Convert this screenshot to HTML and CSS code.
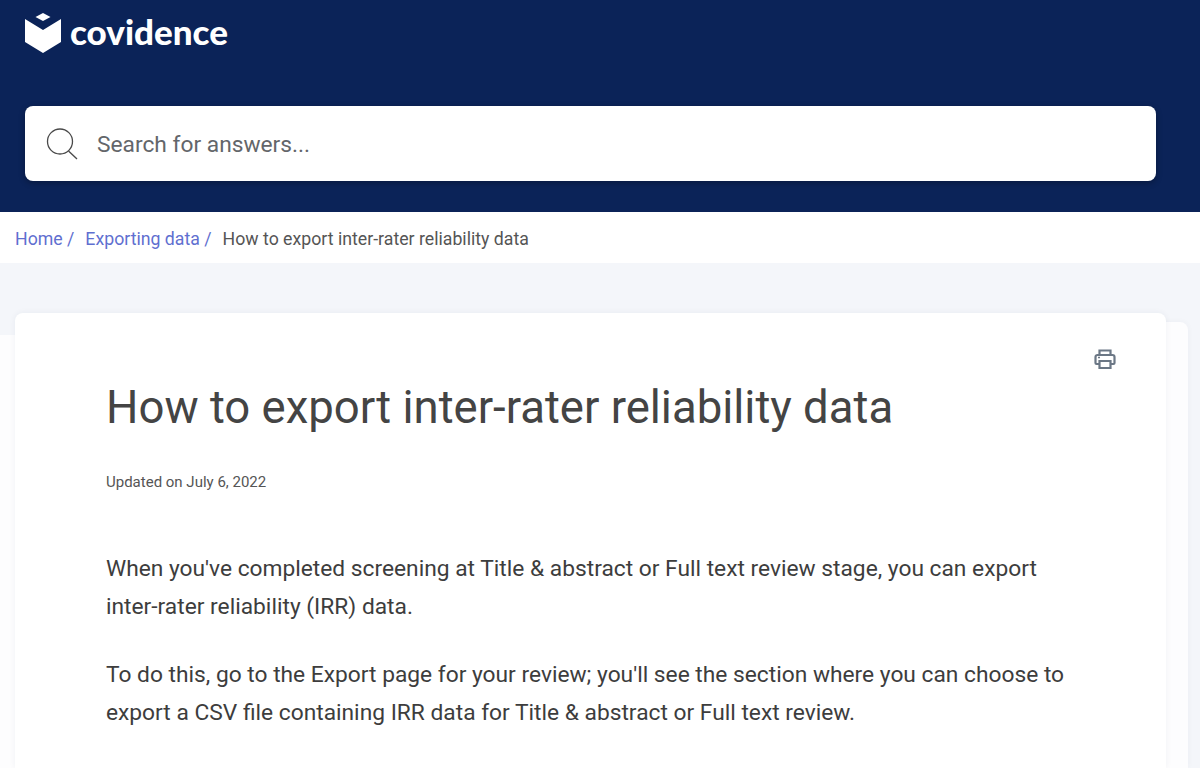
FILE: index.html
```html
<!DOCTYPE html>
<html lang="en">
<head>
    <meta charset="UTF-8">
    <title>How to export inter-rater reliability data</title>
    <link rel="stylesheet" href="styles.css">
</head>
<body>
    <header class="site-header">
        <a class="logo" href="#">
            <svg class="logo-mark" viewBox="0 0 36 40" width="36" height="40" aria-hidden="true">
                <path d="M18 0l7.500 4-7.500 4-7.500-4z" fill="#fff"/>
                <path d="M0 6l18 11 18-11v23l-18 11-18-11z" fill="#fff"/>
            </svg>
            <span class="logo-text">covidence</span>
        </a>
        <div class="search">
            <svg class="search-icon" viewBox="0 0 32 32" width="32" height="32" aria-hidden="true">
                <circle cx="14" cy="13.500" r="12.500" fill="none" stroke="#4a4a4a" stroke-width="1.300"/>
                <path d="M22.500 23l8.500 8" fill="none" stroke="#4a4a4a" stroke-width="1.300"/>
            </svg>
            <span class="search-placeholder">Search for answers...</span>
        </div>
    </header>

    <nav class="breadcrumb">
        <a href="#">Home /</a>
        <a href="#">Exporting data /</a>
        <span>How to export inter-rater reliability data</span>
    </nav>

    <main class="content">
        <div class="card-back card-back-left"></div>
        <div class="card-back card-back-right"></div>
        <article class="card">
            <svg class="print-icon" viewBox="0 0 22 22" width="22" height="22" aria-hidden="true">
                <path d="M5.500 7V2.500h11V7" fill="none" stroke="#6b7785" stroke-width="2.200"/>
                <path d="M5.500 16H2.500a1 1 0 0 1-1-1V9a2 2 0 0 1 2-2h15a2 2 0 0 1 2 2v6a1 1 0 0 1-1 1h-3" fill="none" stroke="#6b7785" stroke-width="2.200"/>
                <path d="M5.500 13h11v7h-11z" fill="none" stroke="#6b7785" stroke-width="2.200"/>
                <path d="M4 9.500h2" stroke="#6b7785" stroke-width="1.500"/>
            </svg>
            <h1 class="title">How to export inter-rater reliability data</h1>
            <p class="updated">Updated on July 6, 2022</p>
            <p class="body-text">When you've completed screening at Title &amp; abstract or Full text review stage, you can export inter-rater reliability (IRR) data.</p>
            <p class="body-text">To do this, go to the Export page for your review; you'll see the section where you can choose to export a CSV file containing IRR data for Title &amp; abstract or Full text review.</p>
        </article>
    </main>
</body>
</html>
```

FILE: styles.css
```css
html {
    overflow: hidden;
}

body {
    margin: 0;
    height: 768px;
    display: flex;
    flex-direction: column;
    overflow: hidden;
    font-family: 'Roboto', sans-serif;
    background: #f4f6fa;
    color: #444;
}

.site-header {
    height: 212px;
    box-sizing: border-box;
    padding: 13px 44px 0 25px;
    background: #0b2358;
}

.logo {
    display: flex;
    align-items: center;
    gap: 9px;
    height: 40px;
    text-decoration: none;
}

.logo-text {
    padding-bottom: 5px;
    font-family: 'Lato', sans-serif;
    font-size: 35px;
    font-weight: 900;
    line-height: 38px;
    color: #fff;
}

.search {
    display: flex;
    align-items: center;
    gap: 19px;
    height: 75px;
    margin-top: 53px;
    padding-left: 21px;
    background: #fff;
    border-radius: 8px;
    box-shadow: 0 2px 6px rgba(0, 0, 0, 0.3);
}

.search-placeholder {
    padding-top: 2px;
    font-size: 22.750px;
    color: #63666a;
}

.breadcrumb {
    display: flex;
    align-items: center;
    gap: 11px;
    height: 51px;
    box-sizing: border-box;
    padding: 2px 0 0 15px;
    background: #fff;
    font-size: 17.720px;
    color: #555;
}

.breadcrumb a {
    color: #5f6fd0;
    text-decoration: none;
}

.content {
    position: relative;
    flex: 1;
    padding: 50px 34px 0 15px;
}

.card-back {
    position: absolute;
    bottom: 0;
    width: 60px;
    background: #fdfdfe;
}

.card-back-left {
    top: 72px;
    left: 0;
}

.card-back-right {
    top: 59px;
    right: 12px;
    border-radius: 0 8px 0 0;
    box-shadow: 0 0 6px rgba(40, 50, 80, 0.04);
}

.card {
    position: relative;
    height: 455px;
    box-sizing: border-box;
    padding: 63px 91px 0;
    background: #fff;
    border-radius: 8px 8px 0 0;
    box-shadow: 0 0 6px rgba(40, 50, 80, 0.06);
}

.print-icon {
    position: absolute;
    top: 35px;
    right: 50px;
}

.title {
    margin: 0;
    font-size: 45.500px;
    font-weight: 400;
    line-height: 64px;
    color: #444;
}

.updated {
    margin: 31px 0 0;
    font-size: 15px;
    line-height: 22px;
    color: #555;
}

.body-text {
    margin: 0 0 30px;
    font-size: 22.750px;
    line-height: 38px;
    color: #3d3d3d;
}

.updated + .body-text {
    margin-top: 57px;
}
```
